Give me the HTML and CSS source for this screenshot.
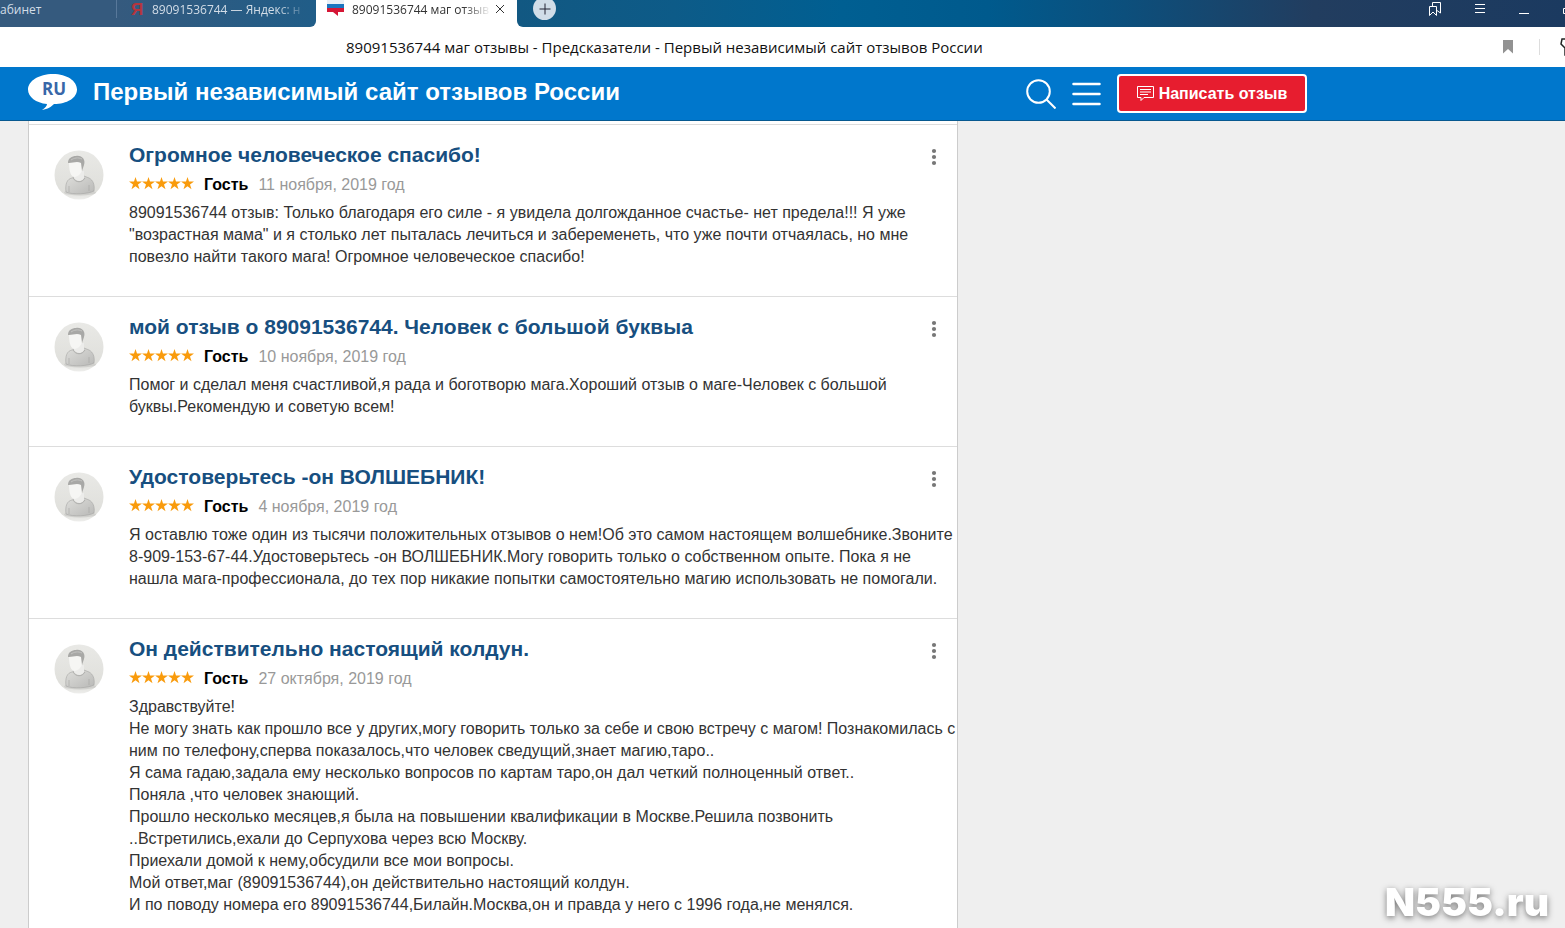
FILE: index.html
```html
<!DOCTYPE html>
<html lang="ru">
<head>
<meta charset="utf-8">
<title>89091536744 маг отзывы</title>
<link rel="stylesheet" href="styles.css">
</head>
<body>
<svg class="defs" aria-hidden="true">
  <defs>
    <linearGradient id="shirt" x1="0" y1="0" x2="1" y2="1"><stop offset="0" stop-color="#dededb"/><stop offset="1" stop-color="#b9b9b7"/></linearGradient>
    <linearGradient id="disc" x1="0" y1="0" x2="0" y2="1"><stop offset="0" stop-color="#e9e9e6"/><stop offset=".85" stop-color="#dfdfdb"/><stop offset="1" stop-color="#eeeeec"/></linearGradient>
    <symbol id="avatar" viewBox="0 0 50 50">
      <circle cx="25" cy="25" r="24.500" fill="url(#disc)"/>
      <ellipse cx="26" cy="42.500" rx="16" ry="3" fill="#d0d0cd"/>
      <path d="M12 42c-1-8 1-13 6-14l5-2h7l5 2c4 2 6 7 5 13-6 3-21 4-28 1z" fill="url(#shirt)" stroke="#a4a4a2" stroke-width=".6"/>
      <path d="M20 22v6c3 4 8 4 10 0v-7z" fill="#ececea"/>
      <path d="M19 28c3 5 9 5 12 0" fill="none" stroke="#a4a4a2" stroke-width=".8"/>
      <path d="M15 42v-6M35 41v-6" stroke="#a4a4a2" stroke-width=".6"/>
      <path d="M15 12c0 7 1 14 5 15 5 0 9-5 9-13l-4-4-9 1z" fill="#f6f6f4"/>
      <path d="M14 13c0-5 4-7 8-7 6-1 10 4 8 9l-2 6-1-8c-4-2-8 0-12 0z" fill="#a8a8a6"/>
      <path d="M17 10c3-2 7-3 11-1" fill="none" stroke="#c4c4c2"/>
    </symbol>
    <symbol id="stars" viewBox="0 0 65 13">
      <g fill="#f99b0c">
        <path id="star" d="M6.500 0 8 4.600H13L9 7.500l1.500 4.700-4-2.900-4 2.900L4 7.500 0 4.600h5z"/>
        <use href="#star" x="13"/><use href="#star" x="26"/><use href="#star" x="39"/><use href="#star" x="52"/>
      </g>
    </symbol>
    <symbol id="dots" viewBox="0 0 6 18"><g fill="#777"><circle cx="3" cy="3" r="2.100"/><circle cx="3" cy="9" r="2.100"/><circle cx="3" cy="15" r="2.100"/></g></symbol>
  </defs>
</svg>

<div class="tabs">
  <div class="tab tab-first"><span class="tab-label">абинет</span></div>
  <div class="tab tab-second">
    <b class="yandex">Я</b><span class="tab-label fade">89091536744 — Яндекс: н</span>
  </div>
  <div class="tab tab-active">
    <svg class="flag" viewBox="0 0 17 16"><path d="M0 0h17v4H0z" fill="#e8eef5"/><path d="M0 4h17v4H0z" fill="#1b75bf"/><path d="M0 8h17v4h-6v4l-5-4H0z" fill="#d51635"/></svg>
    <span class="tab-label fade">89091536744 маг отзыв</span>
    <button class="plain close" aria-label="Закрыть вкладку"><svg viewBox="0 0 10 10"><path d="M1 1l8 8M9 1L1 9" stroke="#333" fill="none"/></svg></button>
  </div>
  <div class="tab-rest">
    <button class="new-tab" aria-label="Новая вкладка"><svg viewBox="0 0 12 12"><path d="M6 .5v11M.5 6h11" stroke="#223" fill="none"/></svg></button>
    <div class="window-tools">
      <button class="plain" aria-label="Закладки"><svg width="14" height="17" viewBox="0 0 14 17"><path d="M1.500 6.500h7v9L5 12l-3.500 3.500zM4.500 6V2.500h8V13L9 10.500" fill="none" stroke="#fff"/></svg></button>
      <button class="plain" aria-label="Меню браузера"><svg width="12" height="16" viewBox="0 0 12 16"><path d="M1 4.500h10M1 8.500h10M1 12.500h10" stroke="#fff"/></svg></button>
      <button class="plain" aria-label="Свернуть"><svg width="12" height="16" viewBox="0 0 12 16"><path d="M1 13.500h10" stroke="#fff"/></svg></button>
      <button class="plain" aria-label="Развернуть"><svg width="12" height="16" viewBox="0 0 12 16"><path d="M1.500 8.500h9v5h-9z" fill="none" stroke="#fff"/></svg></button>
    </div>
  </div>
</div>

<div class="address">
  <span class="page-title">89091536744 маг отзывы - Предсказатели - Первый независимый сайт отзывов России</span>
  <div class="address-tools">
    <button class="plain" aria-label="В закладки"><svg width="10" height="14" viewBox="0 0 10 14"><path d="M0 0h10v13.500L5 9 0 13.500z" fill="#929292"/></svg></button>
    <span class="separator"></span>
    <svg class="key" width="18" height="20" viewBox="0 0 18 20"><path d="M2 2h12l2 4-2 5h-4v7H5v-7L1 7z" fill="none" stroke="#222" stroke-width="1.500"/></svg>
  </div>
</div>

<header class="header">
  <a class="brand" href="#">
    <svg class="logo" viewBox="0 0 50 36"><path d="M25 0C39 0 49 7 49 15.500S39 30 26 30c-3 3-6 5-12 6 3-2 5-4 5-6C8 29 0 23 0 15.500 0 7 11 0 25 0z" fill="#fff"/><text x="26" y="21" text-anchor="middle" class="logo-text">RU</text></svg>
    <span>Первый независимый сайт отзывов России</span>
  </a>
  <div class="actions">
    <button class="plain" aria-label="Поиск"><svg width="30" height="30" viewBox="0 0 30 30"><g fill="none" stroke="#fff" stroke-width="2"><circle cx="12.500" cy="12.500" r="11.300"/><path d="M20.500 20.500l9 9"/></g></svg></button>
    <button class="plain" aria-label="Меню"><svg width="29" height="24" viewBox="0 0 29 24"><path d="M1.500 2h26M1.500 12h26M1.500 22h26" stroke="#fff" stroke-width="2.500" stroke-linecap="round"/></svg></button>
    <button class="write"><svg width="17" height="15" viewBox="0 0 17 15"><path d="M.5.500h16v11H7l-3 3v-3H.500zM3 3.500h11M3 6h11M3 8.500h8" fill="none" stroke="#fff"/></svg>Написать отзыв</button>
  </div>
</header>

<main class="page">
  <section class="reviews">
    <article class="review">
      <svg class="avatar"><use href="#avatar"/></svg>
      <div class="body">
        <h2>Огромное человеческое спасибо!</h2>
        <div class="meta"><svg class="stars"><use href="#stars"/></svg><b>Гость</b><time>11 ноября, 2019 год</time></div>
        <p>89091536744 отзыв: Только благодаря его силе - я увидела долгожданное счастье- нет предела!!! Я уже<br>"возрастная мама" и я столько лет пыталась лечиться и забеременеть, что уже почти отчаялась, но мне<br>повезло найти такого мага! Огромное человеческое спасибо!</p>
      </div>
      <button class="plain more" aria-label="Ещё"><svg><use href="#dots"/></svg></button>
    </article>
    <article class="review">
      <svg class="avatar"><use href="#avatar"/></svg>
      <div class="body">
        <h2>мой отзыв о 89091536744. Человек с большой буквыа</h2>
        <div class="meta"><svg class="stars"><use href="#stars"/></svg><b>Гость</b><time>10 ноября, 2019 год</time></div>
        <p>Помог и сделал меня счастливой,я рада и боготворю мага.Хороший отзыв о маге-Человек с большой<br>буквы.Рекомендую и советую всем!</p>
      </div>
      <button class="plain more" aria-label="Ещё"><svg><use href="#dots"/></svg></button>
    </article>
    <article class="review">
      <svg class="avatar"><use href="#avatar"/></svg>
      <div class="body">
        <h2>Удостоверьтесь -он ВОЛШЕБНИК!</h2>
        <div class="meta"><svg class="stars"><use href="#stars"/></svg><b>Гость</b><time>4 ноября, 2019 год</time></div>
        <p>Я оставлю тоже один из тысячи положительных отзывов о нем!Об это самом настоящем волшебнике.Звоните<br>8-909-153-67-44.Удостоверьтесь -он ВОЛШЕБНИК.Могу говорить только о собственном опыте. Пока я не<br>нашла мага-профессионала, до тех пор никакие попытки самостоятельно магию использовать не помогали.</p>
      </div>
      <button class="plain more" aria-label="Ещё"><svg><use href="#dots"/></svg></button>
    </article>
    <article class="review">
      <svg class="avatar"><use href="#avatar"/></svg>
      <div class="body">
        <h2>Он действительно настоящий колдун.</h2>
        <div class="meta"><svg class="stars"><use href="#stars"/></svg><b>Гость</b><time>27 октября, 2019 год</time></div>
        <p>Здравствуйте!<br>Не могу знать как прошло все у других,могу говорить только за себе и свою встречу с магом! Познакомилась с<br>ним по телефону,сперва показалось,что человек сведущий,знает магию,таро..<br>Я сама гадаю,задала ему несколько вопросов по картам таро,он дал четкий полноценный ответ..<br>Поняла ,что человек знающий.<br>Прошло несколько месяцев,я была на повышении квалификации в Москве.Решила позвонить<br>..Встретились,ехали до Серпухова через всю Москву.<br>Приехали домой к нему,обсудили все мои вопросы.<br>Мой ответ,маг (89091536744),он действительно настоящий колдун.<br>И по поводу номера его 89091536744,Билайн.Москва,он и правда у него с 1996 года,не менялся.</p>
      </div>
      <button class="plain more" aria-label="Ещё"><svg><use href="#dots"/></svg></button>
    </article>
  </section>
</main>
<div class="watermark">N555.ru</div>
</body>
</html>
```
FILE: styles.css
```css
* { box-sizing: border-box; }
body {
  margin: 0;
  height: 100vh;
  overflow: hidden;
  display: flex;
  flex-direction: column;
  background: #efefef;
  font-family: "Liberation Sans", Arial, sans-serif;
  font-size: 16px;
  color: #333;
}
svg { display: block; flex: none; }
.defs { position: absolute; width: 0; height: 0; }
.plain { border: 0; padding: 0; background: none; flex: none; }

.tabs {
  display: flex;
  flex: none;
  height: 27px;
  overflow: hidden;
  background: #fff;
  font-family: "Open Sans", "Noto Sans", sans-serif;
  font-size: 12px;
  line-height: 19px;
}
.tab { display: flex; align-items: flex-start; flex: none; white-space: nowrap; }
.tab-first { width: 117px; background: #355a7e; color: #d3dde7; }
.tab-second {
  width: 199px;
  padding-left: 14px;
  gap: 12px;
  background: linear-gradient(90deg, #355a7e, #205d88);
  color: #d3dde7;
  border-bottom-right-radius: 6px;
}
.tab-second::before { content: ""; width: 1px; height: 18px; margin-left: -15px; margin-right: 2px; background: #58789a; }
.yandex { width: 9px; font-family: "Liberation Sans", sans-serif; font-size: 17px; line-height: 19px; color: #b5353d; }
.tab-active { width: 201px; padding-left: 11px; gap: 8px; color: #333; }
.fade { width: 156px; mask-image: linear-gradient(90deg, #000 80%, transparent); }
.tab-active .fade { width: 139px; }
.flag { width: 17px; height: 16px; }
.close { padding-top: 4px; margin-left: -4px; }
.close svg { width: 10px; height: 10px; }
.tab-rest {
  flex: 1;
  display: flex;
  justify-content: space-between;
  min-width: 0;
  padding-left: 16px;
  border-bottom-left-radius: 6px;
  background: linear-gradient(90deg, #125882 0%, #0d5b88 15%, #005f92 31%, #005a8d 45%, #0c4f7c 58%, #223d5f 76%, #1b3a60 100%);
}
.new-tab {
  display: grid;
  place-items: center;
  width: 23px;
  height: 23px;
  margin-top: -3px;
  padding: 0;
  border: 0;
  border-radius: 50%;
  background: #d1dde8;
}
.new-tab svg { width: 12px; height: 12px; }
.window-tools { display: flex; gap: 32px; align-items: flex-start; margin-right: -9px; }

.address {
  display: flex;
  align-items: center;
  justify-content: space-between;
  flex: none;
  height: 40px;
  padding-left: 346px;
  background: #fff;
  color: #111;
  font-family: "Open Sans", "Noto Sans", sans-serif;
  font-size: 15px;
  white-space: nowrap;
}
.address-tools { display: flex; align-items: center; margin-right: -13px; }
.separator { width: 1px; height: 16px; margin: 0 20px 0 26px; background: #ddd; }

.header {
  display: flex;
  align-items: center;
  flex: none;
  height: 54px;
  padding: 0 28px;
  background: #0077cc;
  border-bottom: 1px solid #075990;
}
.brand {
  display: flex;
  align-items: center;
  gap: 15px;
  width: 998px;
  flex: none;
  color: #fff;
  font-size: 24px;
  font-weight: bold;
  line-height: 28px;
  text-decoration: none;
  white-space: nowrap;
  padding-bottom: 4px;
}
.logo { width: 50px; height: 36px; }
.logo-text { font: bold 17px "Open Sans", sans-serif; fill: #3867a8; }
.actions { display: flex; align-items: center; gap: 16px; }
.write {
  display: flex;
  align-items: center;
  justify-content: center;
  gap: 5px;
  width: 190px;
  height: 39px;
  padding: 0;
  border: 2px solid #fff;
  border-radius: 4px;
  background: #e71d2f;
  color: #fff;
  font: bold 16px "Liberation Sans", Arial, sans-serif;
  white-space: nowrap;
}

.page { flex: 1; min-height: 0; padding-left: 28px; }
.reviews {
  width: 930px;
  padding-top: 3px;
  background: #fff;
  border: 1px solid #ccc;
  border-top: 0;
}
.review {
  display: flex;
  align-items: flex-start;
  padding: 17px 20px 28px 25px;
  border-top: 1px solid #ddd;
}
.avatar { width: 50px; height: 50px; margin: 8px 25px 0 0; }
.body { flex: 1; min-width: 0; }
h2 { margin: 0; font-size: 21px; line-height: 26px; color: #174f80; }
.meta { display: flex; align-items: center; gap: 10px; height: 22px; margin: 6px 0; color: #999; }
.meta b { color: #000; }
.stars { width: 65px; height: 13px; margin-bottom: 3px; }
p { margin: 0; line-height: 22px; white-space: nowrap; }
.more { padding-top: 6px; }
.more svg { width: 6px; height: 18px; }

.watermark {
  position: fixed;
  right: 16px;
  bottom: 4px;
  font: 900 39px/44px Inter, "Open Sans", sans-serif;
  color: #fff;
  text-shadow: 0 2px 6px #777;
}
```
